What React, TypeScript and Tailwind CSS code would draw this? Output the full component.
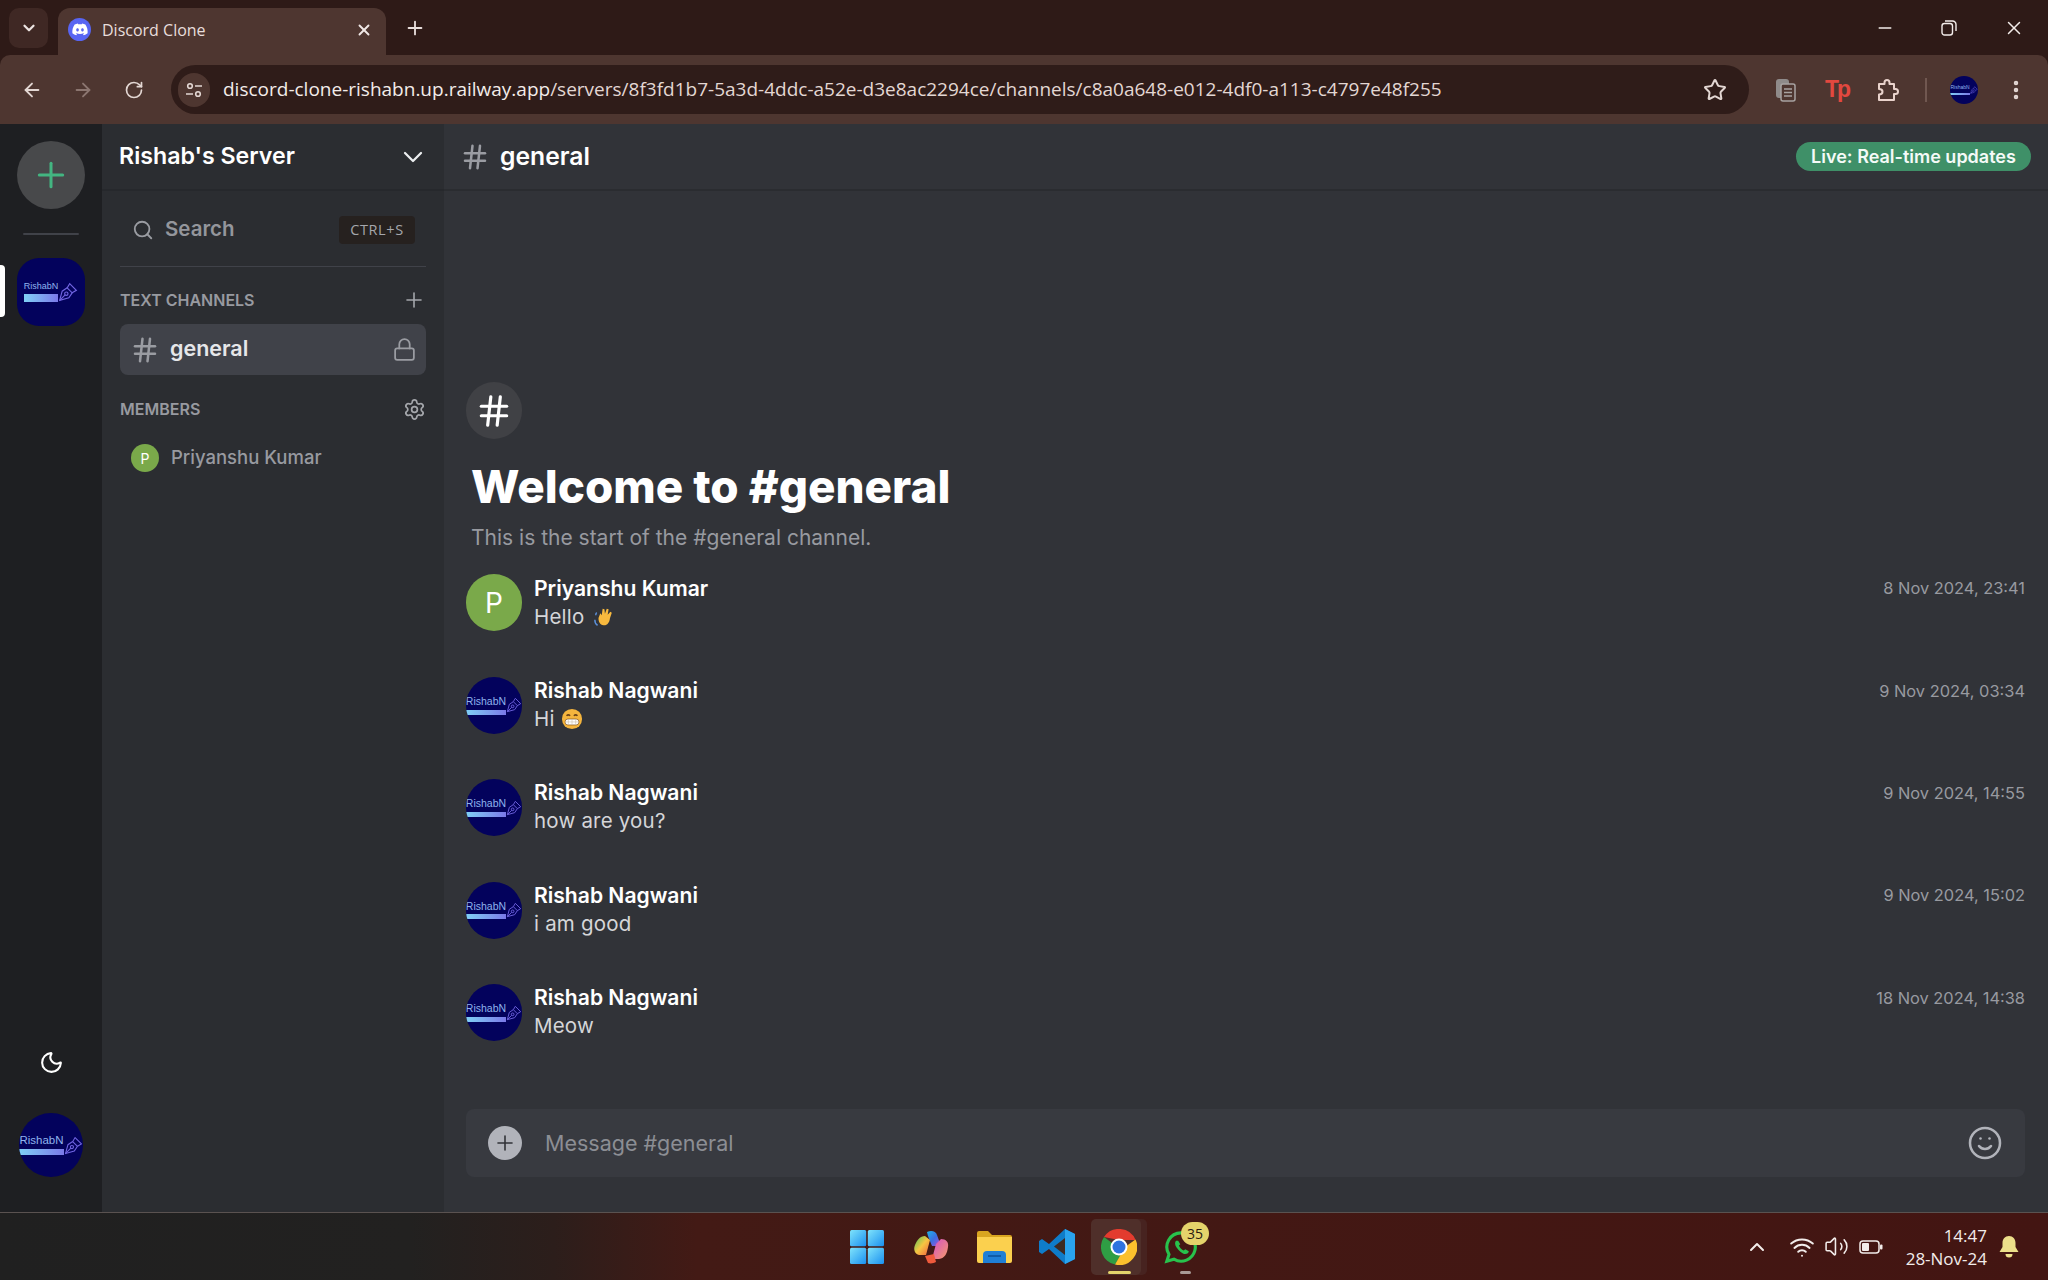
import React from "react";
import { ArrowLeft, ArrowRight, RotateCw, Star, X, Minus, Plus, ChevronDown, EllipsisVertical, Search, Lock, Settings, Hash, Moon, Smile, ChevronUp, Wifi, Volume2 } from "lucide-react";

const ui = "font-['Inter','Noto_Sans',sans-serif]";

function Logo({ box, text, ribbon, pen }: { box: string; text: string; ribbon: string; pen: number }) {
  return (
    <div className={`flex shrink-0 items-center justify-center overflow-hidden bg-[#03025c] ${box}`}>
      <div className="flex flex-col items-start">
        <span className={`font-['Liberation_Sans',sans-serif] leading-none text-[#8fb4ee] ${text}`}>RishabN</span>
        <span className={`mt-[3px] w-full bg-gradient-to-r from-[#7fd0f5] to-[#7a78e8] ${ribbon}`} />
      </div>
      <svg width={pen} height={pen} viewBox="0 0 24 24" fill="none" stroke="#6f63e0" strokeWidth="1.4" className="shrink-0">
        <path d="M14 2l8 8-5 3-6-6z" />
        <path d="M11 7L5 11 2 22l11-3 4-6" />
        <circle cx="10" cy="14" r="2" />
        <path d="M2 22l6.6-6.6" />
      </svg>
    </div>
  );
}

function MsgAvatar({ name }: { name: string }) {
  if (name.startsWith("P"))
    return <div className="flex h-[57px] w-[56px] shrink-0 items-center justify-center rounded-full bg-[#7aa94a] text-[28px] text-white">P</div>;
  return <Logo box="h-[57px] w-[56px] rounded-full" text="text-[10.500px]" ribbon="h-[5px]" pen={16} />;
}

function Wave() {
  return (
    <svg width="22" height="22" viewBox="0 0 24 24" className="ml-[9px] inline-block align-[-4px]">
      <path d="M2 15c0 3 1 5 3 6M4 7c-1 1-1 2-1 3" stroke="#5b8fd6" strokeWidth="1.6" fill="none" />
      <path d="M6 13l2-5 1.5 2 1-7 2 .5.5 5 2-5.5 2 .6-1 6 3-3.4 1.5 1.2-2 6c-.6 5-3 8-7 7.6-4-.5-5.6-4-5.5-8.3z" fill="#f7b93e" />
    </svg>
  );
}

function Grin() {
  return (
    <svg width="22" height="22" viewBox="0 0 24 24" className="ml-[6px] inline-block align-[-4px]">
      <circle cx="12" cy="12" r="11" fill="#f5b53d" />
      <path d="M6 8.5q2-2 4 0M14 8.5q2-2 4 0" stroke="#6d4317" strokeWidth="1.6" fill="none" />
      <rect x="4.5" y="12" width="15" height="6.5" rx="3" fill="#fff" stroke="#8a5a20" strokeWidth=".8" />
      <path d="M4.5 15.2h15M8 12v6.5M12 12v6.5M16 12v6.5" stroke="#c9b9a0" strokeWidth=".6" />
    </svg>
  );
}

const messages = [
  { name: "Priyanshu Kumar", text: "Hello", extra: <Wave />, time: "8 Nov 2024, 23:41" },
  { name: "Rishab Nagwani", text: "Hi", extra: <Grin />, time: "9 Nov 2024, 03:34" },
  { name: "Rishab Nagwani", text: "how are you?", extra: null, time: "9 Nov 2024, 14:55" },
  { name: "Rishab Nagwani", text: "i am good", extra: null, time: "9 Nov 2024, 15:02" },
  { name: "Rishab Nagwani", text: "Meow", extra: null, time: "18 Nov 2024, 14:38" },
];

function Chrome() {
  return (
    <div className="flex h-[56px] items-center justify-between bg-[#2e1a17] pl-[9px] pr-[14px] pt-[8px]">
      <div className="flex h-full items-stretch">
        <div className="mb-[8px] flex w-[39px] items-center justify-center rounded-[10px] bg-[#3f2824] text-[#ece4e2]">
          <ChevronDown size={18} strokeWidth={3} />
        </div>
        <div className="ml-[10px] flex w-[328px] items-center rounded-t-[12px] bg-[#4e3630] pl-[10px] pr-[13px] pb-[5px]">
          <div className="flex h-[23px] w-[23px] items-center justify-center rounded-full bg-[#5865f2]">
            <svg width="16" height="13" viewBox="0 0 24 18" fill="#fff">
              <path d="M20 1.6A19 19 0 0 0 15.3 0l-.6 1.2a18 18 0 0 0-5.4 0L8.7 0A19 19 0 0 0 4 1.6C1 6 .2 10.300.6 14.600a19 19 0 0 0 5.800 3l1.200-2-1.900-1 .5-.4a13.500 13.500 0 0 0 11.600 0l.5.4-1.900 1 1.200 2a19 19 0 0 0 5.800-3c.5-5-.8-9.200-3.400-13zM8.300 11.900c-1.100 0-2-1-2-2.300s.9-2.300 2-2.300 2 1 2 2.300-.9 2.300-2 2.300zm7.400 0c-1.100 0-2-1-2-2.300s.9-2.300 2-2.300 2 1 2 2.300-.9 2.300-2 2.300z" />
            </svg>
          </div>
          <span className="ml-[11px] font-['Open_Sans',sans-serif] text-[16px] text-[#e8dedc]">Discord Clone</span>
          <X size={18} strokeWidth={2.5} className="ml-auto text-[#f0e8e6]" />
        </div>
        <div className="mb-[8px] ml-[18px] flex items-center text-[#e8dedc]">
          <Plus size={22} strokeWidth={2} />
        </div>
      </div>
      <div className="flex items-center gap-[46px] pb-[8px] pr-[9px] text-[#f2ecea]">
        <Minus size={20} strokeWidth={1.6} />
        <svg width="16" height="16" viewBox="0 0 16 16" fill="none" stroke="currentColor" strokeWidth="1.4">
          <rect x="1" y="3.500" width="10.500" height="11.500" rx="2.500" />
          <path d="M4 1h7.500A3.500 3.500 0 0 1 15 4.500V11" />
        </svg>
        <X size={22} strokeWidth={1.6} />
      </div>
    </div>
  );
}

function Toolbar() {
  return (
    <div className="-mt-px flex h-[69px] shrink-0 items-center rounded-t-[10px] bg-[#4e3630] pl-[21px] pr-[20px]">
      <ArrowLeft size={22} className="text-[#e3d7d3]" />
      <ArrowRight size={22} className="ml-[29px] text-[#8c7670]" />
      <RotateCw size={20} className="ml-[30px] text-[#e3d7d3]" />
      <div className="ml-[27px] flex h-[49px] w-[1578px] shrink-0 items-center rounded-full bg-[#2f1c19] pl-[7px] pr-[22px]">
        <div className="flex h-[34px] w-[32px] items-center justify-center rounded-full bg-[#4e3630] text-[#e3d7d3]">
          <svg width="18" height="18" viewBox="0 0 18 18" fill="none" stroke="currentColor" strokeWidth="1.600">
            <circle cx="5" cy="5" r="2.300" />
            <path d="M10 5h7M1 13h7" />
            <circle cx="13" cy="13" r="2.300" />
          </svg>
        </div>
        <span className="ml-[13px] whitespace-nowrap font-['Open_Sans',sans-serif] text-[19px] text-[#e3d7d3]">
          <span className="text-[#f3ecea]">discord-clone-rishabn.up.railway.app</span>/servers/8f3fd1b7-5a3d-4ddc-a52e-d3e8ac2294ce/channels/c8a0a648-e012-4df0-a113-c4797e48f255
        </span>
        <Star size={24} strokeWidth={2} className="ml-auto text-[#e3d7d3]" />
      </div>
      <svg width="22" height="24" viewBox="0 0 22 24" className="ml-[26px] shrink-0">
        <rect x="1" y="1" width="13" height="19" rx="3" fill="#8f8b8a" />
        <rect x="6" y="6" width="14" height="17" rx="2" fill="#4e3630" stroke="#a8a3a1" strokeWidth="1.500" />
        <path d="M9 11h8M9 14.500h8M9 18h8" stroke="#a8a3a1" strokeWidth="1.400" />
      </svg>
      <span className="ml-[27px] flex w-[26px] items-center justify-center font-['Liberation_Sans',sans-serif] text-[23px] font-bold leading-none tracking-[-2px] text-[#e2483f]">Tp</span>
      <svg width="24" height="24" viewBox="0 0 24 24" fill="none" stroke="#ead3cc" strokeWidth="2" strokeLinejoin="round" className="ml-[26px] shrink-0">
        <path d="M3 6h5.500V4.500a2.500 2.500 0 0 1 5 0V6H18v5h1.500a2.500 2.500 0 0 1 0 5H18v6H3v-5.500c2.500 0 3.500-1.300 3.500-2.800S5 11 3 11z" />
      </svg>
      <div className="ml-[25px] h-[24px] w-[2px] shrink-0 bg-[#705750]" />
      <Logo box="ml-[23px] h-[28px] w-[28px] rounded-full" text="text-[5px]" ribbon="h-[2px]" pen={8} />
      <EllipsisVertical size={24} strokeWidth={2.5} className="ml-[26px] shrink-0 text-[#e3d7d3]" />
    </div>
  );
}

function ServerRail() {
  return (
    <div className="relative flex w-[102px] shrink-0 flex-col items-center bg-[#1e1f22] pt-[17px] pb-[35px]">
      <div className="flex h-[68px] w-[68px] items-center justify-center rounded-full bg-[#48494b] text-[#43b581]">
        <Plus size={40} strokeWidth={1.8} />
      </div>
      <div className="mt-[24px] h-[2px] w-[56px] rounded bg-[#404249]" />
      <Logo box="mt-[23px] h-[68px] w-[68px] rounded-[22px]" text="text-[9px]" ribbon="h-[8px]" pen={20} />
      <div className="absolute left-0 top-[141px] h-[52px] w-[5px] rounded-r bg-white" />
      <Moon size={25} className="mt-auto text-white" />
      <Logo box="mt-[38px] h-[64px] w-[64px] rounded-full" text="text-[11.500px]" ribbon="h-[6px]" pen={19} />
    </div>
  );
}

function ChannelBar() {
  return (
    <div className="flex w-[342px] shrink-0 flex-col bg-[#2b2d31]">
      <div className="flex h-[67px] shrink-0 items-center justify-between border-b-2 border-[#26282c] pr-[15px]">
        <span className="pl-[17px] text-[23.200px] font-semibold text-white">Rishab's Server</span>
        <ChevronDown size={32} strokeWidth={1.7} className="text-[#eceef0]" />
      </div>
      <div className="flex flex-col pl-[18px] pr-[18px]">
        <div className="mt-[24px] flex h-[29px] items-center pl-[12px] pr-[11px]">
          <Search size={22} className="text-[#9a9ca2]" />
          <span className="ml-[11px] text-[20.500px] font-semibold text-[#94969c]">Search</span>
          <span className="ml-auto flex h-[28px] w-[76px] items-center justify-center rounded bg-[#26211f] font-['Open_Sans',sans-serif] text-[14.500px] tracking-[0.6px] text-[#a5a7ac]">CTRL+S</span>
        </div>
        <div className="mt-[22px] h-px bg-[#404249]" />
        <div className="mt-[24px] flex h-[18px] items-center justify-between">
          <span className="text-[16px] font-semibold text-[#989aa0]">TEXT CHANNELS</span>
          <Plus size={24} strokeWidth={1.6} className="text-[#a5a7ac]" />
        </div>
        <div className="mt-[15px] flex h-[51px] items-center rounded-lg bg-[#404249] pl-[10px] pr-[9px]">
          <Hash size={30} strokeWidth={2} className="text-[#9a9ca2]" />
          <span className="ml-[10px] pb-[2px] text-[21.500px] font-semibold text-[#e6e7e9]">general</span>
          <Lock size={25} strokeWidth={1.7} className="ml-auto text-[#9a9ca2]" />
        </div>
        <div className="mt-[25px] flex h-[18px] items-center justify-between">
          <span className="text-[16px] font-semibold text-[#989aa0]">MEMBERS</span>
          <Settings size={23} strokeWidth={1.8} className="text-[#a5a7ac]" />
        </div>
        <div className="mt-[26px] flex items-center pl-[11px]">
          <div className="flex h-[28px] w-[28px] items-center justify-center rounded-full bg-[#7aa94a] text-[14px] text-white">P</div>
          <span className="ml-[12px] text-[18.500px] font-medium text-[#989aa0]">Priyanshu Kumar</span>
        </div>
      </div>
    </div>
  );
}

function Main() {
  return (
    <div className="flex min-w-0 flex-1 flex-col bg-[#313338]">
      <div className="flex h-[67px] shrink-0 items-center border-b-2 border-[#2a2c30] pl-[16px] pr-[17px]">
        <Hash size={30} strokeWidth={2} className="text-[#9a9ca2]" />
        <span className="ml-[10px] text-[24.700px] font-semibold text-white">general</span>
        <span className="ml-auto flex h-[29px] w-[235px] items-center justify-center rounded-full bg-[#3f9068] text-[18px] font-semibold text-[#f4faf7]">Live: Real-time updates</span>
      </div>
      <div className="flex min-h-0 flex-1 flex-col justify-end pl-[22px] pb-[35px] pr-[23px]">
        <div className="flex h-[57px] w-[56px] items-center justify-center rounded-full bg-[#404145] text-white">
          <Hash size={38} strokeWidth={2} />
        </div>
        <h1 className="ml-[5px] mt-[19px] text-[45.800px] font-extrabold leading-[58px] text-white">Welcome to #general</h1>
        <p className="ml-[5px] mt-[8px] text-[21px] leading-[28px] text-[#989aa0]">This is the start of the #general channel.</p>
        <div className="mt-[22px] flex flex-col gap-[45.400px]">
          {messages.map((m, i) => (
            <div key={i} className="flex h-[57px]">
              <MsgAvatar name={m.name} />
              <div className="ml-[12px] flex-1">
                <div className="flex h-[28px] items-center justify-between">
                  <span className="text-[21.100px] font-semibold text-white">{m.name}</span>
                  <span className="text-[16.400px] text-[#989aa0]">{m.time}</span>
                </div>
                <div className="flex h-[29px] items-center text-[20.500px] tracking-[0.2px] text-[#d5d6d9]">
                  <span>{m.text}</span>
                  {m.extra}
                </div>
              </div>
            </div>
          ))}
        </div>
        <div className="mt-[68px] flex h-[68px] shrink-0 items-center rounded-lg bg-[#383a40] pl-[22px] pr-[22px]">
          <div className="flex h-[34px] w-[34px] items-center justify-center rounded-full bg-[#b1b3ba] text-[#313338]">
            <Plus size={24} strokeWidth={1.6} />
          </div>
          <span className="ml-[23px] text-[21.500px] text-[#8c8e94]">Message #general</span>
          <Smile size={36} strokeWidth={1.7} className="ml-auto text-[#b1b3ba]" />
        </div>
      </div>
    </div>
  );
}

function Taskbar() {
  return (
    <div className="grid h-[68px] shrink-0 grid-cols-[1fr_auto_1fr] items-center border-t border-[#5a5250] bg-[linear-gradient(90deg,#202020_0%,#222120_20%,#2c1e1b_27%,#431a15_34%,#431512_100%)]">
      <div />
      <div className="flex items-center">
        <svg width="34" height="34" viewBox="0 0 34 34">
          <defs>
            <linearGradient id="w" x1="0" y1="0" x2="1" y2="1"><stop offset="0" stopColor="#7fe3fb" /><stop offset="1" stopColor="#1a90f0" /></linearGradient>
          </defs>
          <rect x="0" y="0" width="16.200" height="16.200" rx="1.500" fill="url(#w)" />
          <rect x="17.800" y="0" width="16.200" height="16.200" rx="1.500" fill="url(#w)" />
          <rect x="0" y="17.800" width="16.200" height="16.200" rx="1.500" fill="url(#w)" />
          <rect x="17.800" y="17.800" width="16.200" height="16.200" rx="1.500" fill="url(#w)" />
        </svg>
        <svg width="36" height="34" viewBox="0 0 36 34" className="ml-[29px]">
          <defs>
            <linearGradient id="c1" x1="0" y1="0" x2="1" y2="1"><stop offset="0" stopColor="#1fb3e8" /><stop offset=".5" stopColor="#3b6fe0" /><stop offset="1" stopColor="#b24fd6" /></linearGradient>
            <linearGradient id="c2" x1="0" y1="0" x2="1" y2="1"><stop offset="0" stopColor="#d34fc8" /><stop offset="1" stopColor="#f79a6a" /></linearGradient>
            <linearGradient id="c3" x1="0" y1="0" x2="1" y2="1"><stop offset="0" stopColor="#48c35a" /><stop offset=".5" stopColor="#f5c542" /><stop offset="1" stopColor="#f0603f" /></linearGradient>
          </defs>
          <path d="M14 2c4-2 9-1 10 3l4 11H19L15 6z" fill="url(#c1)" />
          <path d="M28 9c5 0 8 3 7 8-1 7-3 11-9 12l-7 0 4-15z" fill="url(#c2)" />
          <path d="M12 6C7 6 4 10 2 15c-2 5 0 9 4 10h7l4-15z" fill="url(#c3)" />
          <path d="M12 26l3 7c3 1 6 0 8-1l-2-8z" fill="#ef5a3c" />
        </svg>
        <svg width="35" height="32" viewBox="0 0 35 32" className="ml-[28px]">
          <path d="M0 2a2 2 0 0 1 2-2h9l4 4h18a2 2 0 0 1 2 2v4H0z" fill="#d9a520" />
          <path d="M0 6h35v24a2 2 0 0 1-2 2H2a2 2 0 0 1-2-2z" fill="#fbd04e" />
          <path d="M6 32V24a4 4 0 0 1 4-4h15a4 4 0 0 1 4 4v8z" fill="#1f7fd6" />
          <path d="M11 25h13" stroke="#0d4f96" strokeWidth="1.500" />
        </svg>
        <svg width="36" height="35" viewBox="0 0 36 35" className="ml-[27px]">
          <path d="M26 0l10 5v25l-10 5L10 20 3 25 0 23v-11l3-2 7 5z" fill="#0f7cc9" />
          <path d="M26 9L15 17.500 26 26z" fill="#43210f" opacity=".9" />
          <path d="M26 0l10 5v25l-10 5z" fill="#2aa3ee" />
        </svg>
        <div className="relative ml-[16px] flex h-[56px] w-[50px] items-center justify-center rounded-[5px] bg-[#4f2f2a] pl-[5px] shadow-[6px_0_0_0_#472320]">
          <svg width="36" height="36" viewBox="0 0 36 36">
            <path d="M3 8a18 18 0 0 0 11 27.600L22 22z" fill="#2f9e44" />
            <path d="M34.500 10.500A18 18 0 0 1 14 35.600L24 18z" fill="#fbc02d" />
            <path d="M3 8A18 18 0 0 1 34.600 11H18z" fill="#e33b2e" />
            <circle cx="18" cy="18" r="8.500" fill="#fff" />
            <circle cx="18" cy="18" r="6.500" fill="#2f73e0" />
          </svg>
          <div className="absolute bottom-[1px] left-[17px] h-[3px] w-[23px] rounded bg-[#e4d36b]" />
        </div>
        <div className="relative ml-[23px] flex h-[56px] w-[34px] items-center justify-center">
          <svg width="34" height="34" viewBox="0 0 24 24" fill="none">
            <path d="M12 2a10 10 0 0 0-8.500 15.200L2 22l5-1.400A10 10 0 1 0 12 2z" stroke="#28c24c" strokeWidth="2.200" />
            <path d="M8.500 7.500c-1 1-1 3 .5 5s4 4.500 6 4.500c1.500 0 2.500-1 2.500-2l-2.500-1.500-1 1c-1.500-.5-3-2-3.500-3.500l1-1L10 7.500z" fill="#28c24c" />
          </svg>
          <span className="absolute left-[17px] top-[3px] flex h-[23px] w-[28px] items-center justify-center rounded-full bg-[#e4d36b] font-['Open_Sans',sans-serif] text-[14px] text-[#2a1a10]">35</span>
          <div className="absolute bottom-[1px] left-[16px] h-[3px] w-[11px] rounded bg-[#a99a96]" />
        </div>
      </div>
      <div className="flex items-center justify-end pr-[29px] text-[#f2ecea]">
        <ChevronUp size={24} strokeWidth={2} />
        <Wifi size={26} strokeWidth={1.8} className="ml-[20px]" />
        <Volume2 size={25} strokeWidth={1.5} className="ml-[9px]" />
        <svg width="24" height="14" viewBox="0 0 24 14" fill="none" className="ml-[10px]">
          <rect x="1" y="1" width="19" height="12" rx="3" stroke="currentColor" strokeWidth="1.500" />
          <rect x="3" y="3" width="7" height="8" rx="1" fill="currentColor" />
          <rect x="21" y="4.500" width="2.500" height="5" rx="1" fill="currentColor" />
        </svg>
        <div className="ml-[23px] flex flex-col items-end font-['Open_Sans',sans-serif] text-[17px] leading-[23px]">
          <span>14:47</span>
          <span>28-Nov-24</span>
        </div>
        <svg width="20" height="22" viewBox="0 0 20 22" className="ml-[12px]" fill="#ecdf8a">
          <path d="M10 0c4 0 6.500 3 6.500 7v4l3 5H.5l3-5V7c0-4 2.500-7 6.500-7z" />
          <path d="M6.500 18a3.500 3.500 0 0 0 7 0z" />
        </svg>
      </div>
    </div>
  );
}

export default function App() {
  return (
    <div className={`flex h-[1280px] w-[2048px] flex-col overflow-hidden bg-[#2e1a17] ${ui}`}>
      <Chrome />
      <Toolbar />
      <div className="flex min-h-0 flex-1">
        <ServerRail />
        <ChannelBar />
        <Main />
      </div>
      <Taskbar />
    </div>
  );
}
